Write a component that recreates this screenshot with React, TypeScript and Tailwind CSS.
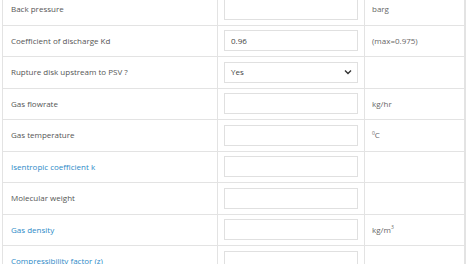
import React from 'react';

type Row = {
  label: string;
  link?: boolean;
  kind?: 'input' | 'select';
  value?: string;
  unit?: React.ReactNode;
};

const rows: Row[] = [
  { label: 'Back pressure', unit: 'barg' },
  { label: 'Coefficient of discharge Kd', value: '0.96', unit: '(max=0.975)' },
  { label: 'Rupture disk upstream to PSV ?', kind: 'select', value: 'Yes' },
  { label: 'Gas flowrate', unit: 'kg/hr' },
  { label: 'Gas temperature', unit: <><sup className="text-[5px]">0</sup>C</> },
  { label: 'Isentropic coefficient k', link: true },
  { label: 'Molecular weight' },
  { label: 'Gas density', link: true, unit: <>kg/m<sup className="text-[5px]">3</sup></> },
  { label: 'Compressibility factor (z)', link: true },
];

export default function App() {
  return (
    <div className="h-[264px] w-[470px] overflow-hidden bg-white font-['Open_Sans',sans-serif] text-[8px] text-[#555]">
      <div className="ml-[2px] -mt-[6px] w-[464px] border-l border-r-2 border-[#e3e3e3]">
        {rows.map((r) => (
          <div key={r.label} className="grid h-[31.5px] grid-cols-[215px_147px_1fr] border-b border-[#e3e3e3]">
            <div className={`flex items-center border-r border-[#e3e3e3] pl-[8px] ${r.link ? 'text-[#2d8ac7]' : ''}`}>
              {r.label}
            </div>
            <div className="flex items-center border-r border-[#e3e3e3] pl-[6px] pr-[6px]">
              <div className="flex h-[21px] w-[134px] items-center justify-between border border-[#e0e0e0] bg-white px-[6px] text-[#444]">
                <span>{r.value}</span>
                {r.kind === 'select' && (
                  <svg width="8" height="6" viewBox="0 0 8 6" className="mr-[-1px]">
                    <path d="M1 1.5 L4 4.5 L7 1.5" fill="none" stroke="#333" strokeWidth="1.4" />
                  </svg>
                )}
              </div>
            </div>
            <div className="flex items-center pl-[7px] text-[#666]">{r.unit}</div>
          </div>
        ))}
      </div>
    </div>
  );
}
